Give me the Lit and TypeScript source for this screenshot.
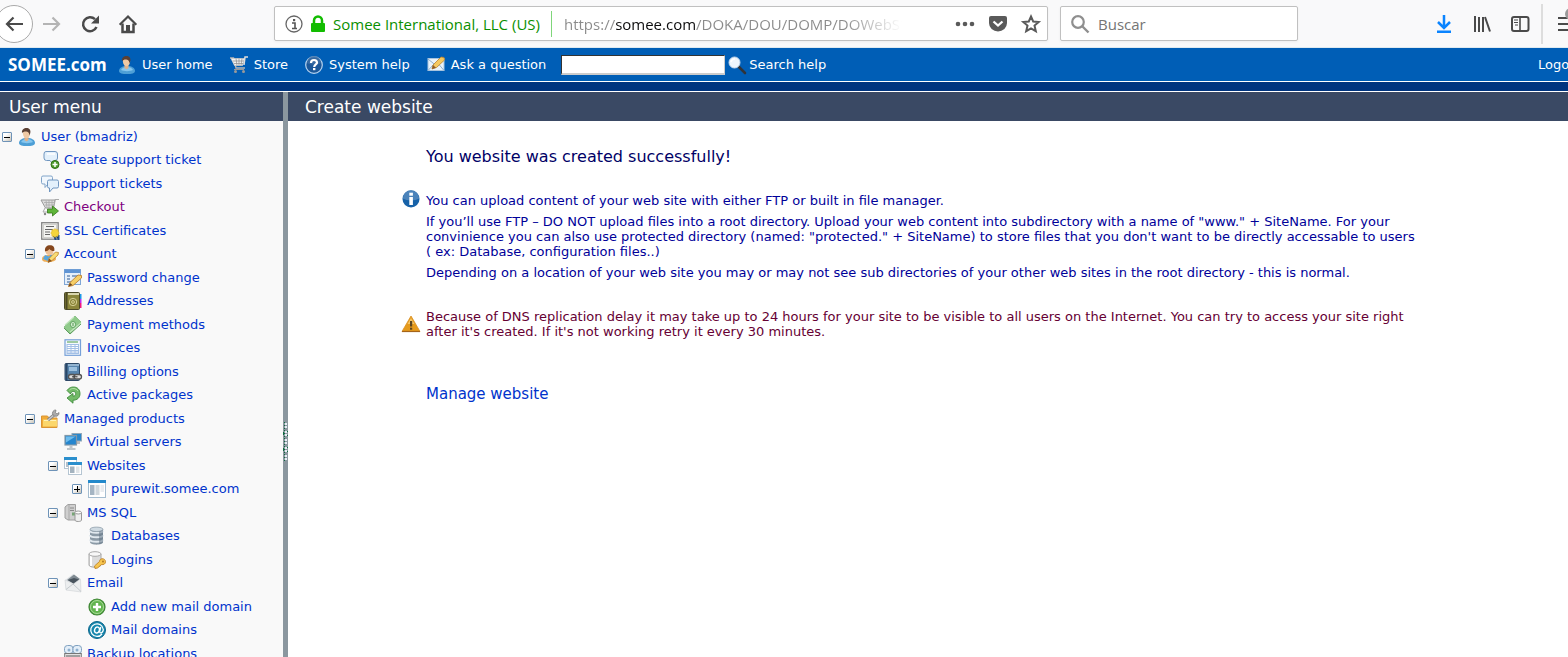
import { LitElement, html, css, svg, TemplateResult } from "lit";
import { customElement, state } from "lit/decorators.js";
import { classMap } from "lit/directives/class-map.js";

const icons: Record<string, TemplateResult> = {
  user: svg`<path d="M1 15c0-3 3-5 8-5s8 2 8 5c0 2.500-3.500 3-8 3s-8-.5-8-3z" fill="#4d9fd6"/><path d="M3 14c1-2 3-3 6-3s5 1 6 3c-3 1.500-9 1.500-12 0z" fill="#86c6ee"/><path d="M6.500 9h4v3l-2 1.500-2-1.500z" fill="#e0b088"/><ellipse cx="8.500" cy="5.500" rx="3.600" ry="4.700" fill="#efc9a4"/><path d="M4 5C3.500 1.500 6 0 8.500 0s4.500 1.500 3.800 5l-1 2.500c0-3-1-4-4-4-1 0-2 .5-3.300 1.500z" fill="#5a4034"/>`,
  cart: svg`<path d="M0 2h3.500L6 12h9" fill="none" stroke="#b5b5b5" stroke-width="1.400"/><path d="M1 2.500h13.500l-2 7h-8z" fill="#f2f2f2" stroke="#ccc" stroke-width=".8"/><path d="M3 5h11M4 7.500h10M6 2.500l1 7M9 2.500v7M12 2.500l-1 7" stroke="#8a8a8a" stroke-width=".7"/><path d="M14 9l1-8h3" stroke="#ddd" stroke-width="1.500" fill="none"/><path d="M4 13.500h10" stroke="#999"/><circle cx="5.500" cy="15.500" r="1.500" fill="#999"/><circle cx="13.500" cy="15.500" r="1.500" fill="#999"/>`,
  help: svg`<circle cx="9" cy="9" r="8.300" fill="#1b5799" stroke="#b7d3ef" stroke-width="1.200"/><path d="M2 7a7 7 0 0 1 14 0c-4 2-10 2-14 0z" fill="#3d6ea4" opacity=".8"/><path d="M6 7c0-2 1.300-3 3-3s3 1 3 2.700S9.200 8.600 9.200 11" stroke="#fff" stroke-width="2.200" fill="none"/><rect x="8" y="12" width="2.400" height="2.200" fill="#fff"/>`,
  ask: svg`<rect x="1" y="2.500" width="16" height="12" fill="#e9f2fa" stroke="#a8c4de"/><path d="M1 3l8 6.500L17 3M1 14.500l5.500-6M17 14.500l-5-6" fill="none" stroke="#8fb0cf"/><path d="M5 13l1-4 8-8 3 .5.500 2.500-8 7.500z" fill="#f4c860" stroke="#b9822c" stroke-width=".8"/><path d="M5 13l1-4 3 2.800z" fill="#8a5a2c"/>`,
  lens: svg`<path d="M10.500 10.500l6.500 6.500" stroke="#30343a" stroke-width="2.600" stroke-linecap="round"/><circle cx="6.500" cy="6.500" r="5.500" fill="#eef5fc" stroke="#c5d8ec"/><path d="M3 6a4 4 0 0 1 4-3" stroke="#fff" stroke-width="1.500" fill="none"/>`,
  ticketAdd: svg`<path d="M5 .5h9q2.500 0 2.500 2.500v4Q16.500 9.500 14 9.500h-1v5l-4-5H5.500Q3 9.500 3 7V3Q3 .5 5 .5z" fill="#e3f0fb" stroke="#7096c0"/><path d="M6 3h8" stroke="#fff" stroke-width="1.500"/><circle cx="14" cy="13.500" r="4" fill="#4f9d2c" stroke="#327016"/><path d="M11.500 13.500h5M14 11v5" stroke="#fff" stroke-width="1.500"/>`,
  tickets: svg`<path d="M2 1h8q1.500 0 1.500 1.500v5Q11.500 9 10 9H7l-3 3.500V9H2Q.5 9 .5 7.500v-5Q.5 1 2 1z" fill="#f1f7fd" stroke="#82a5c9"/><path d="M8 5h8q1.500 0 1.500 1.500v5q0 1.500-1.500 1.500h-4l-3.500 4V13H8q-1.500 0-1.500-1.500v-5Q6.500 5 8 5z" fill="#e3f0fb" stroke="#7096c0"/>`,
  checkout: svg`<path d="M0 2h14l-1.500 8h-8z" fill="#dedede" stroke="#999"/><path d="M3 4.500h11M4 7h10M5 2.500l1 7M8 2v8M11 2v8" stroke="#aaa" stroke-width=".8"/><path d="M13.500 6l.5-4.500h4M4 10l-2 4h7" stroke="#aaa" fill="none"/><circle cx="4" cy="16" r="1.200" fill="#888"/><path d="M6.500 11h5V8l6 5-6 5v-3h-5z" fill="#5fb53a" stroke="#35791b" stroke-width=".8"/>`,
  cert: svg`<rect x=".7" y=".7" width="16.500" height="16.500" fill="#f4f4f2" stroke="#858585" stroke-width="1.300"/><rect x="2.500" y="2.500" width="13" height="13" fill="none" stroke="#d0d0cc"/><path d="M5 4.500h8M4 7.500h8M4 10h5M4 12.500h5" stroke="#666" stroke-width="1.200"/><path d="M12 14h2.500v4M15.500 14h2v4" stroke="#1f4d8c" stroke-width="2"/><path d="M14 6.500l1.200 1.300 1.800-.1.200 1.800 1 1.500-1 1.500-.2 1.800-1.800-.1L14 15.500l-1.200-1.300-1.800.1-.2-1.800-1-1.500 1-1.500.2-1.800 1.800.1z" fill="#f5d53b" stroke="#e0b428" stroke-width=".6"/>`,
  account: svg`<path d="M1 14c0-3 3-4 7-4s7 2 7 4-4 3-7 3-7 0-7-3z" fill="#f0ad55"/><path d="M2 14l2-4 4 1.500 2-2.500 2 3-5 4z" fill="#58a6dd"/><circle cx="8.500" cy="6" r="4" fill="#eec196"/><path d="M4 6.500C3.500 2 6 .3 9 .3s5 1.700 4.300 5.700c-2 .5-4-1-5-2-1 1.500-2 2-4.300 2.500z" fill="#85471e"/><path d="M7 17.500l1-4 6.500-6.500 3 .5-.5 2.500-6.500 6z" fill="#f9dd74" stroke="#bd8228" stroke-width=".8"/><path d="M7 17.500l1-4 3 2.500z" fill="#8a5220"/>`,
  password: svg`<rect x=".5" y=".5" width="16" height="15" fill="#e5effa" stroke="#7fa6d6"/><rect x=".5" y=".5" width="16" height="3.500" fill="#5f94d4"/><path d="M3 7h3M3 10h3M3 13h5M8 7h6" stroke="#6b8cb5" stroke-width="1.300"/><path d="M4.500 17.500l1.500-4 8-7.500 3.500.5v2.500l-8.500 7.500z" fill="#f6cf68" stroke="#bb8030" stroke-width=".9"/><path d="M4.500 17.500l1.500-3.500 2.500 2z" fill="#6d4420"/>`,
  addresses: svg`<path d="M15 2h2.500v5H15z" fill="#1d99e8"/><path d="M15 7h2.500v4H15z" fill="#c02cf0"/><path d="M15 11h2.500v5H15z" fill="#f21880"/><rect x=".5" y=".5" width="15" height="17" rx="1" fill="#8c873c" stroke="#4c4a28"/><path d="M2.500 1v16" stroke="#4d4a25" stroke-width="2"/><path d="M4 2h11" stroke="#f5f2d5" stroke-width="1.500"/><circle cx="9" cy="10" r="3.700" fill="none" stroke="#d5cf93"/><circle cx="9" cy="10" r="1.400" fill="none" stroke="#d5cf93"/>`,
  payment: svg`<path d="M0 11L11 0l6 6L6 18z" fill="#8fca8a" stroke="#6aad67" stroke-width=".6"/><path d="M1 9l9-8M6 16l11-9" stroke="#c2e6bd" stroke-width="1.200"/><path d="M0 12l6 6L17 8" stroke="#5d9e5d" fill="none"/><ellipse cx="9" cy="8.500" rx="2.600" ry="3" fill="#d9f2d5" stroke="#579b57" stroke-width=".9"/><path d="M9 7v3" stroke="#4b8d4b"/>`,
  invoices: svg`<rect x="1" y=".8" width="15.500" height="15.500" fill="#f4f8fd" stroke="#76a0d8" stroke-width="1.200"/><path d="M3 3h11" stroke="#72b172" stroke-width="1.300"/><rect x="3" y="5.500" width="11.500" height="9" fill="#fff" stroke="#a3c0e6"/><path d="M3 7.500h11.500M3 9.500h11.500M3 11.500h11.500M3 13h11.500M7 5.500v9M11 5.500v9" stroke="#a3c0e6"/>`,
  billing: svg`<rect x="1" y=".5" width="14.500" height="17" rx="1" fill="#5785ae" stroke="#2e4866"/><path d="M2.500 1v16" stroke="#2b4766" stroke-width="2"/><rect x="5" y="4" width="8" height="4" fill="#9cc0de"/><path d="M4 2h11" stroke="#cfe2f2"/><rect x="4.500" y="11.500" width="7" height="4.500" rx="2.200" fill="#ddd" stroke="#555" stroke-width="1.300"/><rect x="10" y="11.500" width="7.500" height="4.500" rx="2.200" fill="#ddd" stroke="#555" stroke-width="1.300"/><path d="M8 13.800h5.500" stroke="#333"/>`,
  active: svg`<path d="M3 4.500C5 1.500 7.500 1 9.500 1c4 0 6.500 2.800 6.500 6.700 0 4-2.800 6.500-7 6.500v3L3 12l6-4.500v2.700c1.800 0 2.700-.9 2.700-2.400S10.800 5.500 9.300 5.500 7 6.300 6.500 8z" fill="#72ba68" stroke="#3f8c3c" stroke-width=".9"/><path d="M5.500 4C8 1.800 12 2 14 5" stroke="#b5e2ab" fill="none"/>`,
  managed: svg`<path d="M.5 6h6L8 8h8v9.500H.5z" fill="#f1aa36" stroke="#d99534"/><path d="M2 9.500h14v7H2z" fill="#fbd76c"/><path d="M3 10.500h12" stroke="#fff3b8"/><path d="M7 10l6-5" stroke="#858585" stroke-width="3"/><path d="M7 10l6-5" stroke="#c9c9c9" stroke-width="1.500"/><path d="M12 5a3.200 3.200 0 0 1 3-5l-.5 2.500L16 4l2-1.500A3.200 3.200 0 0 1 13.500 6z" fill="#aaa" stroke="#777" stroke-width=".7"/>`,
  servers: svg`<rect x="8" y=".5" width="9.500" height="7.500" fill="#2a87cb" stroke="#93a9ba"/><rect x="13" y="8" width="3" height="3" fill="#bbb"/><rect x="1" y="2.500" width="11.500" height="9.500" fill="#2586cf" stroke="#8298a8" stroke-width="1.200"/><path d="M2 3.500h9.500L2 9.500z" fill="#6ebcec"/><path d="M5.500 12.500h3v2.500h3v2H3v-2h2.500z" fill="#bec5ca"/>`,
  websites: svg`<rect x=".5" y=".5" width="12" height="11" fill="#fff" stroke="#b5c5d2"/><rect x="0" y="0" width="13" height="3" fill="#2b8fcd"/><rect x="2" y="5" width="3" height="5" fill="#b4c0ca"/><rect x="4.500" y="5.500" width="13" height="12" fill="#fff" stroke="#b5c5d2"/><rect x="4" y="5" width="14" height="3" fill="#2b8fcd"/><rect x="6" y="9.500" width="4.500" height="6.500" fill="#a4b3bf"/><rect x="12" y="9.500" width="3.500" height="6.500" fill="#e1e5e8"/>`,
  website: svg`<rect x=".5" y=".5" width="17" height="17" fill="#fff" stroke="#a5bdd0"/><rect width="18" height="3" fill="#2389cb"/><rect x="2" y="5" width="4.500" height="10" fill="#a5b5c3"/><rect x="7.500" y="5" width="4" height="10" fill="#d0d7dc"/><rect x="12.500" y="5" width="3.500" height="7" fill="#e9ecef"/>`,
  sql: svg`<path d="M1 3l3-2.500h7.500V16H4l-3-2z" fill="#cfcfcf" stroke="#a0a0a0"/><path d="M5 1v15" stroke="#999" stroke-width=".7"/><path d="M6 4h4M6 6.500h4" stroke="#888"/><rect x="8" y="8.500" width="3" height="3" fill="#77a576"/><path d="M11 8.500v7.500c0 2 6.500 2 6.500 0V8.500" fill="#eee" stroke="#999"/><ellipse cx="14.200" cy="8.500" rx="3.200" ry="1.500" fill="#fff" stroke="#999"/>`,
  db: svg`<path d="M2 2v13c0 3.500 13 3.500 13 0V2" fill="#8b9aa6"/><path d="M2 3.500c0 3 13 3 13 0M2 8c0 3 13 3 13 0M2 12.500c0 3 13 3 13 0" fill="none" stroke="#e0e8ee" stroke-width="2"/><path d="M11 4v13c2 0 4-.8 4-2V3z" fill="#5f7282" opacity=".5"/><ellipse cx="8.500" cy="2.300" rx="6.500" ry="2.200" fill="#cfdae2" stroke="#8797a3" stroke-width=".7"/>`,
  logins: svg`<path d="M1 3v11c0 3 12 3 12 0V3" fill="#dcdcdc" stroke="#a8a8a8"/><path d="M3 5v10" stroke="#fff" stroke-width="2"/><ellipse cx="7" cy="3" rx="6" ry="2.300" fill="#f8f8f8" stroke="#a8a8a8"/><path d="M7 17.500l-.5-2.500 5-4.500c0-4 6-3.500 6 .2 0 2.300-2 3.300-4 2.800L9.500 17z" fill="#f8c64e" stroke="#c0842a" stroke-width=".9"/><circle cx="15" cy="10.500" r=".9" fill="#a66f20"/>`,
  email: svg`<path d="M1 6l8-6 7 5.500.5 11.500L2 16z" fill="#dfe3e6"/><path d="M3 6l7-5.500 6 4.500-6 5z" fill="#808b93"/><path d="M4 6l6-2 5 1.500-5.500 4z" fill="#49545e"/><path d="M1 6l8.500 4 7-5 .5 13-15-2z" fill="#eceeef" stroke="#d0d3d6" stroke-width=".6"/><path d="M2 15.500l7-5.500 8 7.500" fill="none" stroke="#c4c9cd"/>`,
  add: svg`<circle cx="9" cy="9" r="8" fill="#62b44f" stroke="#3e8534" stroke-width="1.200"/><circle cx="9" cy="9" r="6.500" fill="none" stroke="#a9dc98"/><path d="M9 5v8M5 9h8" stroke="#fff" stroke-width="2.400"/>`,
  at: svg`<circle cx="9" cy="9" r="8.500" fill="#1687ad" stroke="#0d668b"/><path d="M14 13a6.300 6.300 0 1 1 1.300-4.500c0 2-1.500 3.500-2.600 3.300-1 0-1.200-.8-.9-1.800l1-4" fill="none" stroke="#fff" stroke-width="1.300"/><ellipse cx="9" cy="9" rx="2.400" ry="3" transform="rotate(20 9 9)" fill="none" stroke="#fff" stroke-width="1.400"/>`,
  backup: svg`<rect x=".5" y=".5" width="8.500" height="8" rx="3" fill="#e3eef8" stroke="#7fa0c0"/><rect x="9" y=".5" width="8.500" height="8" rx="3" fill="#e3eef8" stroke="#7fa0c0"/><circle cx="5" cy="5" r="1.500" fill="#8db0d0"/><circle cx="13" cy="5" r="1.500" fill="#8db0d0"/><rect x=".7" y="8.500" width="16.600" height="9" fill="#e2e2e2" stroke="#777"/><path d="M2 11h14" stroke="#888" stroke-width="1.500"/>`,
  info: svg`<circle cx="9" cy="9" r="8.500" fill="#1762a8"/><path d="M.8 8.500a8.200 8.200 0 0 1 16.400 0c-4 2.500-12 2.500-16.400 0z" fill="#4b83ba"/><rect x="7.300" y="2.700" width="3.600" height="3" fill="#fff"/><rect x="7.300" y="7" width="3.600" height="8" fill="#fff"/>`,
  warn: svg`<path d="M9 1L18 16.500H0z" fill="#e59a1c" stroke="#d98f22" stroke-width=".8"/><path d="M9 3l3.500 6h-7z" fill="#f6c565"/><path d="M0 16.500h18" stroke="#a5641a" stroke-width="1.200"/><rect x="8" y="6" width="2.200" height="5.500" fill="#5a4420"/><rect x="8" y="12.700" width="2.200" height="2" fill="#5a4420"/>`,
  back: svg`<path d="M18 9H2M8.500 2.500L2 9l6.500 6.500" fill="none" stroke="#4a4a4a" stroke-width="2.200"/>`,
  forward: svg`<path d="M0 9h16M9.500 2.500L16 9l-6.500 6.500" fill="none" stroke="#b4b4b4" stroke-width="2.200"/>`,
  reload: svg`<path d="M14 4.200A7 7 0 1 0 15.500 12" fill="none" stroke="#4a4a4a" stroke-width="2.500"/><path d="M18 .5v8h-8z" fill="#4a4a4a"/>`,
  home: svg`<path d="M.7 9.700L9 1.500l8.300 8.200" fill="none" stroke="#4a4a4a" stroke-width="2.200"/><path d="M3.500 8.500v8.500h11V8.500" fill="none" stroke="#4a4a4a" stroke-width="2.500"/><path d="M7 10h4v7H7z" fill="#4a4a4a"/>`,
  identity: svg`<circle cx="9" cy="9" r="8" fill="none" stroke="#666" stroke-width="1.300"/><rect x="8" y="4" width="2.200" height="2.200" fill="#555"/><path d="M7 8h3v5.500M7 13.500h5" fill="none" stroke="#555" stroke-width="1.600"/>`,
  lock: svg`<path d="M5 9V5.500a4 4 0 0 1 8 0V9" fill="none" stroke="#12bc00" stroke-width="2.500"/><rect x="2" y="8" width="14" height="9" rx="1" fill="#12bc00"/>`,
  dots: svg`<circle cx="2" cy="9" r="2.300" fill="#5a5a5a"/><circle cx="9" cy="9" r="2.300" fill="#5a5a5a"/><circle cx="16" cy="9" r="2.300" fill="#5a5a5a"/>`,
  pocket: svg`<path d="M2 1h14q2 0 2 2v5a9 8.500 0 0 1-18 0V3Q0 1 2 1z" fill="#5a5a5a"/><path d="M4.500 6.500L9 10.500l4.500-4" fill="none" stroke="#fff" stroke-width="2.300"/>`,
  star: svg`<path d="M9 1.500l2.200 5 5.500.5-4.200 3.600 1.300 5.600L9 13.300l-4.800 2.900 1.300-5.600L1.300 7l5.500-.5z" fill="none" stroke="#5a5a5a" stroke-width="2"/>`,
  search: svg`<circle cx="7" cy="7" r="5.800" fill="none" stroke="#8f8f8f" stroke-width="2.200"/><path d="M11 11l6.500 6.500" stroke="#8f8f8f" stroke-width="2.400"/>`,
  download: svg`<path d="M9 0v12M3 7l6 6 6-6" fill="none" stroke="#0a84ff" stroke-width="2.500"/><rect x="2" y="15.500" width="14" height="2.500" fill="#0a84ff"/>`,
  library: svg`<path d="M2 1v16M6 2v15M10 2v15M12 2l5 14.500" fill="none" stroke="#4a4a4a" stroke-width="2"/>`,
  sidebar: svg`<rect x="1" y="2" width="16.500" height="14" rx="2" fill="none" stroke="#4a4a4a" stroke-width="2"/><path d="M9 2v14" stroke="#4a4a4a" stroke-width="1.600"/><path d="M3 5h4M3 7.500h4M4 10h3" stroke="#4a4a4a" stroke-width="1.200"/>`,
  menu: svg`<path d="M0 3h18M0 9h18M0 15h18" stroke="#4a4a4a" stroke-width="2"/><circle cx="13" cy="-1" r="6" fill="#9a9a9a"/>`,
};

const icon = (name: string) =>
  html`<svg class="icon" viewBox="0 0 18 18" aria-hidden="true">${icons[name]}</svg>`;

interface Row {
  level: number;
  icon: string;
  label: string;
  toggle?: "open" | "closed";
  visited?: boolean;
}

const rows: Row[] = [
  { level: 0, icon: "user", label: "User (bmadriz)", toggle: "open" },
  { level: 1, icon: "ticketAdd", label: "Create support ticket" },
  { level: 1, icon: "tickets", label: "Support tickets" },
  { level: 1, icon: "checkout", label: "Checkout", visited: true },
  { level: 1, icon: "cert", label: "SSL Certificates" },
  { level: 1, icon: "account", label: "Account", toggle: "open" },
  { level: 2, icon: "password", label: "Password change" },
  { level: 2, icon: "addresses", label: "Addresses" },
  { level: 2, icon: "payment", label: "Payment methods" },
  { level: 2, icon: "invoices", label: "Invoices" },
  { level: 2, icon: "billing", label: "Billing options" },
  { level: 2, icon: "active", label: "Active packages" },
  { level: 1, icon: "managed", label: "Managed products", toggle: "open" },
  { level: 2, icon: "servers", label: "Virtual servers" },
  { level: 2, icon: "websites", label: "Websites", toggle: "open" },
  { level: 3, icon: "website", label: "purewit.somee.com", toggle: "closed" },
  { level: 2, icon: "sql", label: "MS SQL", toggle: "open" },
  { level: 3, icon: "db", label: "Databases" },
  { level: 3, icon: "logins", label: "Logins" },
  { level: 2, icon: "email", label: "Email", toggle: "open" },
  { level: 3, icon: "add", label: "Add new mail domain" },
  { level: 3, icon: "at", label: "Mail domains" },
  { level: 2, icon: "backup", label: "Backup locations" },
];

const shared = css`
  :host, * { box-sizing: border-box; }
  .icon { display: block; width: 18px; height: 18px; flex: none; overflow: visible; }
  button { border: 0; padding: 0; background: none; font: inherit; color: inherit; flex: none; }
  a { text-decoration: none; white-space: nowrap; }
  input { font: inherit; min-width: 0; border: 0; padding: 0; outline: 0; background: none; }
`;

@customElement("browser-bar")
export class BrowserBar extends LitElement {
  static styles = [shared, css`
    :host { display: flex; align-items: center; height: 48px; background: #f9f9fa; border-bottom: 1px solid #dfeaf0; font: 15px/20px "Open Sans", "Noto Sans", sans-serif; }
    .nav { display: flex; align-items: center; gap: 20px; width: 274px; flex: none; }
    .back { display: grid; place-items: center; width: 38px; height: 38px; margin-left: -5px; margin-right: -10px; border: 1px solid #aaa; border-radius: 50%; background: #fff; }
    .box { display: flex; align-items: center; height: 35px; border: 1px solid #c0c0c0; border-radius: 2px; background: #fff; box-shadow: 0 1px 3px #0000000d; }
    .address { flex: 1; min-width: 0; padding-left: 10px; gap: 6px; }
    .owner { padding-right: 11px; border-right: 1px solid #7fd67a; line-height: 26px; color: #0a8f00; white-space: nowrap; }
    .url { flex: 1; margin: 0 41px 0 6px; color: transparent; background: linear-gradient(90deg, #8a8a8a 51px, #0c0c0d 51px, #0c0c0d 132px, #8a8a8a 132px, #8a8a8a 280px, transparent 338px); -webkit-background-clip: text; background-clip: text; }
    .actions { display: flex; gap: 15px; padding-right: 7px; }
    .search { width: 238px; margin-left: 12px; padding-left: 10px; gap: 9px; flex: none; }
    .search input { flex: 1; }
    .search input::placeholder { color: #757575; opacity: 1; }
    .tools { display: flex; align-items: center; gap: 20px; width: 270px; padding-left: 137px; flex: none; }
    .menu { margin-left: -8px; padding-left: 15px; border-left: 2px solid #ddd; height: 40px; display: flex; align-items: center; }
  `];
  render() {
    return html`
      <nav class="nav" aria-label="Browser">
        <button class="back" aria-label="Back">${icon("back")}</button>
        <button aria-label="Forward">${icon("forward")}</button>
        <button aria-label="Reload">${icon("reload")}</button>
        <button aria-label="Home">${icon("home")}</button>
      </nav>
      <div class="box address">
        ${icon("identity")}${icon("lock")}
        <span class="owner">Somee International, LLC (US)</span>
        <input class="url" aria-label="Address" value="https://somee.com/DOKA/DOU/DOMP/DOWebSite" />
        <div class="actions">
          <button aria-label="Page actions">${icon("dots")}</button>
          <button aria-label="Save to Pocket">${icon("pocket")}</button>
          <button aria-label="Bookmark">${icon("star")}</button>
        </div>
      </div>
      <div class="box search">
        ${icon("search")}<input type="search" aria-label="Buscar" placeholder="Buscar" />
      </div>
      <div class="tools">
        <button aria-label="Downloads">${icon("download")}</button>
        <button aria-label="Library">${icon("library")}</button>
        <button aria-label="Sidebars">${icon("sidebar")}</button>
        <button class="menu" aria-label="Menu">${icon("menu")}</button>
      </div>`;
  }
}

@customElement("site-header")
export class SiteHeader extends LitElement {
  static styles = [shared, css`
    :host { display: block; background: #003580; border-bottom: 1px solid #fff; font: 13px/18px "DejaVu Sans", Verdana, sans-serif; color: #fff; }
    .bar { display: flex; align-items: center; height: 34px; padding-left: 8px; margin-bottom: 9px; background: #005eb6; border-bottom: 1px solid #fff; }
    a { color: #fff; }
    .brand { font: bold 17px/20px "Open Sans", sans-serif; width: 110px; }
    .links { display: flex; gap: 17px; }
    .links a { display: flex; align-items: center; gap: 6px; }
    .find { display: flex; align-items: center; gap: 3px; margin-left: 15px; }
    .find input { width: 164px; height: 20px; padding: 0 4px; background: #fff; border: 1px solid #333; border-right-color: #ccc; border-bottom: 2px solid #ccc; }
    .find button { display: flex; align-items: center; gap: 3px; }
    .logout { width: 30px; margin-left: auto; }
  `];
  render() {
    const links = [["user", "User home"], ["cart", "Store"], ["help", "System help"], ["ask", "Ask a question"]];
    return html`<header class="bar">
      <a class="brand" href="#">SOMEE.com</a>
      <nav class="links">${links.map(([i, t]) => html`<a href="#">${icon(i)}${t}</a>`)}</nav>
      <form class="find" @submit=${(e: Event) => e.preventDefault()}>
        <input type="text" aria-label="Search help" />
        <button>${icon("lens")}Search help</button>
      </form>
      <a class="logout" href="#">Logout</a>
    </header>`;
  }
}

@customElement("user-menu")
export class UserMenu extends LitElement {
  @state() private folded = new Set<string>();
  static styles = [shared, css`
    :host { display: block; background: #f9f9f9; font: 13px/18px "DejaVu Sans", Verdana, sans-serif; }
    h2 { margin: 0; padding: 2px 0 0 9px; font-size: 17px; font-weight: normal; line-height: 27px; color: #fff; background: #3a4964; }
    ul { list-style: none; margin: 0; padding: 4px 0 0; }
    li { display: flex; align-items: center; height: 23px; }
    li:nth-child(even) { height: 24px; }
    .level-0 { padding-left: 2px; }
    .level-1 { padding-left: 25px; }
    .level-2 { padding-left: 48px; }
    .level-3 { padding-left: 72px; }
    .toggle, .blank { width: 10px; height: 10px; margin-right: 6px; flex: none; }
    .toggle { position: relative; border: 1px solid #6e93b8; border-radius: 1px; background: linear-gradient(135deg, #fff 30%, #c9c4b8); }
    .toggle::before, .closed::after { content: ""; position: absolute; background: #000; }
    .toggle::before { left: 1px; top: 4px; width: 6px; height: 1px; }
    .closed::after { left: 4px; top: 1px; width: 1px; height: 6px; }
    a { display: flex; align-items: center; gap: 5px; color: #0033cc; }
    .visited { color: #800080; }
  `];
  private flip(label: string) {
    const next = new Set(this.folded);
    if (!next.delete(label)) next.add(label);
    this.folded = next;
  }
  private shown(): Row[] {
    let limit = Infinity;
    return rows.filter((r) => {
      if (r.level > limit) return false;
      limit = this.folded.has(r.label) ? r.level : Infinity;
      return true;
    });
  }
  render() {
    return html`<h2>User menu</h2><ul>${this.shown().map((r) => html`
      <li class="level-${r.level}">
        ${r.toggle
          ? html`<button class=${classMap({ toggle: true, closed: r.toggle === "closed" || this.folded.has(r.label) })} aria-label="Toggle ${r.label}" @click=${() => this.flip(r.label)}></button>`
          : html`<span class="blank"></span>`}
        <a class=${classMap({ visited: !!r.visited })} href="#">${icon(r.icon)}${r.label}</a>
      </li>`)}</ul>`;
  }
}

@customElement("create-website")
export class CreateWebsite extends LitElement {
  static styles = [shared, css`
    :host { display: block; background: #fff; font: 13px/15px "DejaVu Sans", Verdana, sans-serif; color: #000099; }
    h1 { margin: 0; padding: 2px 0 0 17px; font-size: 17px; font-weight: normal; line-height: 27px; color: #fff; background: #3a4964; }
    .content { display: grid; grid-template-columns: 18px 1fr; column-gap: 6px; padding: 27px 148px 0 114px; }
    h2, .manage { grid-column: 2; margin: 0; line-height: 18px; font-weight: normal; }
    h2 { font-size: 16px; color: #000066; margin-bottom: 24px; }
    p { margin: 0 0 6px; }
    .text { padding-top: 3px; margin-bottom: 23px; }
    .text.warning { margin-bottom: 46px; color: #660033; padding-top: 0; }
    .warn { align-self: start; padding-top: 6px; }
    .manage { font-size: 15px; color: #0033cc; justify-self: start; }
  `];
  render() {
    return html`<h1>Create website</h1>
      <section class="content">
        <h2>You website was created successfully!</h2>
        <div>${icon("info")}</div>
        <div class="text">
          <p>You can upload content of your web site with either FTP or built in file manager.</p>
          <p>If you’ll use FTP – DO NOT upload files into a root directory. Upload your web content into subdirectory with a name of "www." + SiteName. For your convinience you can also use protected directory (named: "protected." + SiteName) to store files that you don't want to be directly accessable to users ( ex: Database, configuration files..)</p>
          <p>Depending on a location of your web site you may or may not see sub directories of your other web sites in the root directory - this is normal.</p>
        </div>
        <div class="warn">${icon("warn")}</div>
        <p class="text warning">Because of DNS replication delay it may take up to 24 hours for your site to be visible to all users on the Internet. You can try to access your site right after it's created. If it's not working retry it every 30 minutes.</p>
        <a class="manage" href="#">Manage website</a>
      </section>`;
  }
}

@customElement("app-root")
export class AppRoot extends LitElement {
  static styles = css`
    :host { display: flex; flex-direction: column; height: 100vh; overflow: hidden; }
    browser-bar, site-header { flex: none; }
    .main { display: flex; flex: 1 0 700px; }
    user-menu { width: 283px; flex: none; }
    .splitter { display: grid; align-content: center; width: 5px; flex: none; background: #8b979f; }
    .grip { display: block; width: 5px; height: 41px; }
    create-website { flex: 1; min-width: 0; }
  `;
  render() {
    return html`<browser-bar></browser-bar><site-header></site-header>
      <div class="main">
        <user-menu></user-menu>
        <div class="splitter" role="separator" aria-orientation="vertical">
          <svg class="grip" viewBox="0 0 5 41" shape-rendering="crispEdges" aria-hidden="true">
            ${[0, 8, 16, 24, 32].map((y, i) => svg`
              <path d="M1 ${y}h1v1h-1zM1 ${y + 3}h1v1h-1zM1 ${y + 6}h1v1h-1z" fill="#0d6b3f"/>
              <path d="M2 ${y + 1}h2v2h-2zM2 ${y + 4}h2v2h-2z" fill="#e6f0f5"/>
              ${i % 2 ? svg`<path d="M0 ${y + 2}h1v3h-1zM4 ${y + 1}h1v1h-1zM4 ${y + 5}h1v1h-1z" fill="#0d6b3f"/>` : null}`)}
          </svg>
        </div>
        <create-website></create-website>
      </div>`;
  }
}
